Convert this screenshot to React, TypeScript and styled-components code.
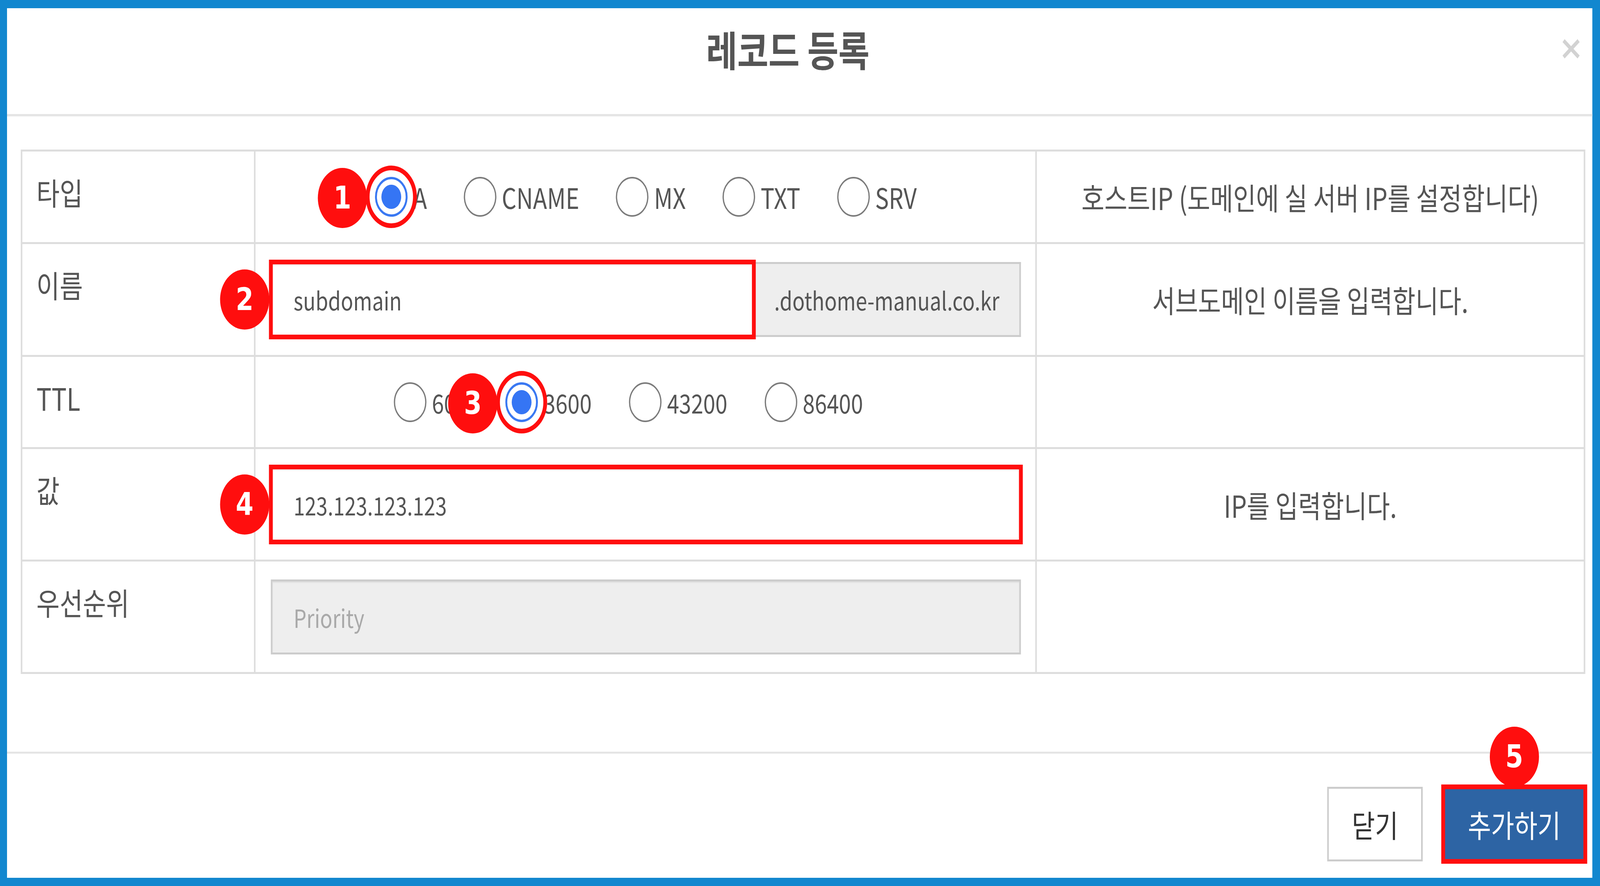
import React from "react";
import styled, { createGlobalStyle } from "styled-components";

const RED = "#ff0e0e";
const FONT = `"Noto Sans CJK KR", "Malgun Gothic", sans-serif`;
const DESIGN_W = 5009;
const DESIGN_H = 2269;

const Global = createGlobalStyle`
  html, body { margin: 0; padding: 0; }
  html, body { width: 100vw; height: 100vh; overflow: hidden; }
  body {
    font-family: ${FONT};
    background: #1287cf;
  }
  * { box-sizing: border-box; }
`;

const Frame = styled.div`
  width: ${DESIGN_W}px;
  height: ${DESIGN_H}px;
  transform-origin: 0 0;
  background: #1287cf;
  padding: 21px 24px 21px 22px;
`;

const Modal = styled.div`
  width: 100%;
  height: 100%;
  background: #fff;
  display: flex;
  flex-direction: column;
`;

const Header = styled.header`
  flex: none;
  height: 277px;
  border-bottom: 6px solid #e5e5e5;
  display: grid;
  grid-template-columns: 1fr auto 1fr;
  align-items: start;
  padding-right: 74px;
`;

const Title = styled.h1`
  grid-column: 2;
  margin: 0;
  padding-top: 33px;
  font-size: 106px;
  line-height: 140px;
  font-weight: 700;
  color: #555;
  white-space: nowrap;
`;

const CloseButton = styled.button`
  grid-column: 3;
  justify-self: end;
  margin: 79px -36px 0 0;
  padding: 0;
  border: 0;
  background: none;
  width: 57px;
  height: 50px;
  display: flex;
`;

const Body = styled.main`
  flex: 1;
  padding: 85px 22px 0 43px;
`;

const RecordTable = styled.div`
  display: grid;
  grid-template-columns: 725px 2441px 1712px;
  grid-template-rows: 232px 284px 231px 283px 283px;
  gap: 5px;
  padding: 5px;
  background: #dddddd;
  width: 4898px;
`;

const LabelCell = styled.div`
  background: #fff;
  padding: 54px 0 0 44px;
  font-size: 79px;
  line-height: 100px;
  color: #555;
  white-space: nowrap;
`;

const ContentCell = styled.div<{ $center?: boolean }>`
  background: #fff;
  display: flex;
  align-items: center;
  justify-content: ${(p) => (p.$center ? "center" : "flex-start")};
  padding: 0 45px 0 48px;
`;

const DescCell = styled.div`
  background: #fff;
  display: flex;
  align-items: center;
  justify-content: center;
  font-size: 78px;
  color: #555;
  white-space: nowrap;
`;

const RadioGroup = styled.div<{ $gap: number; $trail?: number }>`
  display: flex;
  align-items: center;
  gap: ${(p) => p.$gap}px;
  padding-right: ${(p) => p.$trail ?? 0}px;
`;

const RadioOption = styled.label<{ $size: number }>`
  display: inline-flex;
  align-items: center;
  gap: 17px;
  font-size: ${(p) => p.$size}px;
  line-height: 1;
  color: #555;
  white-space: nowrap;
`;

const RadioBox = styled.span`
  position: relative;
  flex: none;
  display: inline-flex;
`;

const RadioCircle = styled.span<{ $checked?: boolean }>`
  width: 102px;
  height: 102px;
  border-radius: 50%;
  border: ${(p) => (p.$checked ? "6px solid #3a78f2" : "4px solid #7b7b7b")};
  background: #fff;
  display: flex;
  align-items: center;
  justify-content: center;
  &::after {
    content: "";
    display: ${(p) => (p.$checked ? "block" : "none")};
    width: 62px;
    height: 62px;
    border-radius: 50%;
    background: #3575f4;
  }
`;

const Ring = styled.span`
  position: absolute;
  left: 50%;
  top: 50%;
  width: 160px;
  height: 160px;
  margin: -80px 0 0 -80px;
  border: 12px solid ${RED};
  border-radius: 50%;
  pointer-events: none;
`;

type Place = "radio" | "input" | "button";

const badgePlace: Record<Place, string> = {
  radio: "left: -179px; top: -23px;",
  input: "left: -159px; top: 50%; transform: translateY(-50%);",
  button: "left: 50%; bottom: 100%; transform: translateX(-50%);",
};

const Badge = styled.span<{ $place: Place }>`
  position: absolute;
  ${(p) => badgePlace[p.$place]}
  width: 154px;
  height: 154px;
  border-radius: 50%;
  background: ${RED};
  color: #fff;
  font-family: "DejaVu Sans", sans-serif;
  font-weight: 700;
  font-size: 80px;
  line-height: 1;
  display: flex;
  align-items: center;
  justify-content: center;
  z-index: 2;
`;

const Annotated = styled.div`
  position: relative;
  flex: 1;
  display: flex;
  &::after {
    content: "";
    position: absolute;
    inset: -6px;
    border: 12px solid ${RED};
    pointer-events: none;
  }
`;

const InputGroup = styled.div`
  display: flex;
  width: 100%;
`;

const TextInput = styled.input<{ $muted?: boolean }>`
  flex: 1;
  width: 100%;
  height: 192px;
  border: 5px solid #ccc;
  background: ${(p) => (p.$muted ? "#eeeeee" : "#fff")};
  box-shadow: inset 0 3px 3px rgba(0, 0, 0, 0.075);
  padding: 0 66px;
  font-family: ${FONT};
  font-size: 64px;
  color: #555;
  outline: none;
  &::placeholder {
    color: #a9a9a9;
  }
`;

const Addon = styled.span`
  flex: none;
  height: 192px;
  display: flex;
  align-items: center;
  padding: 0 62px 0 64px;
  background: #eeeeee;
  border: 5px solid #ccc;
  border-left: 0;
  font-size: 64px;
  color: #555;
  white-space: nowrap;
`;

const Footer = styled.footer`
  flex: none;
  height: 323px;
  border-top: 5px solid #e5e5e5;
  display: flex;
  justify-content: flex-end;
  align-items: flex-start;
  gap: 64px;
  padding: 85px 22px 0 0;
`;

const ButtonWrap = styled.div`
  position: relative;
  display: flex;
`;

const Button = styled.button<{ $primary?: boolean }>`
  height: 191px;
  padding: 0 72px;
  border: 5px solid ${(p) => (p.$primary ? "#2e6da4" : "#ccc")};
  background: ${(p) => (p.$primary ? "#2d64a4" : "#fff")};
  color: ${(p) => (p.$primary ? "#fff" : "#333")};
  font-family: ${FONT};
  font-size: 79px;
  white-space: nowrap;
`;

type Opt = { label: string; checked?: boolean; badge?: string };

function Radio({ label, checked, badge, size }: Opt & { size: number }) {
  return (
    <RadioOption $size={size}>
      <RadioBox>
        <RadioCircle $checked={checked} />
        {badge && (
          <>
            <Ring />
            <Badge $place="radio">{badge}</Badge>
          </>
        )}
      </RadioBox>
      <span>{label}</span>
    </RadioOption>
  );
}

const typeOptions: Opt[] = [
  { label: "A", checked: true, badge: "1" },
  { label: "CNAME" },
  { label: "MX" },
  { label: "TXT" },
  { label: "SRV" },
];

const ttlOptions: Opt[] = [
  { label: "600" },
  { label: "3600", checked: true, badge: "3" },
  { label: "43200" },
  { label: "86400" },
];

function useFitScale() {
  const get = () => {
    if (typeof window === "undefined") return { x: 1, y: 1 };
    const w = document.documentElement.clientWidth || window.innerWidth;
    const h = document.documentElement.clientHeight || window.innerHeight;
    return { x: w / DESIGN_W, y: h / DESIGN_H };
  };
  const [scale, setScale] = React.useState(get);
  React.useEffect(() => {
    const onResize = () => setScale(get());
    window.addEventListener("resize", onResize);
    return () => window.removeEventListener("resize", onResize);
  }, []);
  return scale;
}

export default function App() {
  const scale = useFitScale();
  return (
    <>
      <Global />
      <Frame style={{ transform: `scale(${scale.x}, ${scale.y})` }}>
        <Modal>
          <Header>
            <Title>레코드 등록</Title>
            <CloseButton aria-label="close">
              <svg width="57" height="50" viewBox="0 0 57 50">
                <path d="M5 4 L52 46 M52 4 L5 46" stroke="#d2d2d2" strokeWidth="10" />
              </svg>
            </CloseButton>
          </Header>
          <Body>
            <RecordTable>
              <LabelCell>타입</LabelCell>
              <ContentCell $center>
                <RadioGroup $gap={115}>
                  {typeOptions.map((o) => (
                    <Radio key={o.label} size={72} {...o} />
                  ))}
                </RadioGroup>
              </ContentCell>
              <DescCell>호스트IP (도메인에 실 서버 IP를 설정합니다)</DescCell>

              <LabelCell>이름</LabelCell>
              <ContentCell>
                <InputGroup>
                  <Annotated>
                    <Badge $place="input">2</Badge>
                    <TextInput readOnly value="subdomain" />
                  </Annotated>
                  <Addon>.dothome-manual.co.kr</Addon>
                </InputGroup>
              </ContentCell>
              <DescCell>서브도메인 이름을 입력합니다.</DescCell>

              <LabelCell>TTL</LabelCell>
              <ContentCell $center>
                <RadioGroup $gap={117} $trail={109}>
                  {ttlOptions.map((o) => (
                    <Radio key={o.label} size={68} {...o} />
                  ))}
                </RadioGroup>
              </ContentCell>
              <DescCell />

              <LabelCell>값</LabelCell>
              <ContentCell>
                <Annotated>
                  <Badge $place="input">4</Badge>
                  <TextInput readOnly value="123.123.123.123" />
                </Annotated>
              </ContentCell>
              <DescCell>IP를 입력합니다.</DescCell>

              <LabelCell>우선순위</LabelCell>
              <ContentCell>
                <TextInput $muted readOnly placeholder="Priority" />
              </ContentCell>
              <DescCell />
            </RecordTable>
          </Body>
          <Footer>
            <Button>닫기</Button>
            <ButtonWrap>
              <Annotated>
                <Badge $place="button">5</Badge>
                <Button $primary>추가하기</Button>
              </Annotated>
            </ButtonWrap>
          </Footer>
        </Modal>
      </Frame>
    </>
  );
}
